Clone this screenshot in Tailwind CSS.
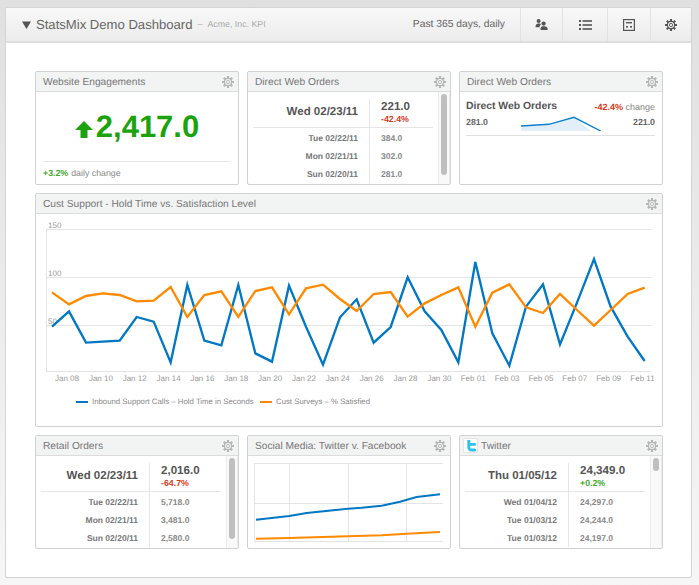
<!DOCTYPE html>
<html>
<head>
<meta charset="utf-8">
<script src="https://cdn.jsdelivr.net/npm/@tailwindcss/browser@4"></script>
</head>
<body class="m-0 h-[585px] w-[699px] overflow-hidden bg-gradient-to-b from-[#e0e0e0] to-[#f6f6f6] font-['Liberation_Sans',Arial,sans-serif] [text-rendering:geometricPrecision]">
<svg class="hidden" width="0" height="0">
  <symbol id="gear" viewBox="0 0 12 12">
    <path d="M6 0V12M0 6H12M1.8 1.8L10.2 10.2M10.2 1.8L1.8 10.2" stroke="currentColor" stroke-width="2.1" fill="none"/>
    <circle cx="6" cy="6" r="4.2" fill="currentColor"/>
    <circle cx="6" cy="6" r="3" fill="#f2f3f3"/>
    <circle cx="6" cy="6" r="1.6" fill="none" stroke="currentColor" stroke-width="0.9"/>
  </symbol>
</svg>
<div class="pt-[7px] pl-[5px]">
  <div class="h-[571px] w-[687px] rounded-[2px] border border-[#d4d4d4] bg-white">
    <!-- top bar -->
    <div class="flex h-[35px] items-center border-b-2 border-[#dedede] bg-gradient-to-b from-[#f8f8f8] to-[#ececec]">
      <svg class="ml-[16px] mr-[5px] h-[8px] w-[9px]" viewBox="0 0 9 8"><path d="M0 0.5H9L4.5 8Z" fill="#555"/></svg>
      <span class="whitespace-nowrap text-[13.1px] text-[#666]">StatsMix Demo Dashboard</span>
      <span class="ml-[5px] text-[9px] text-[#aaa]">–</span>
      <span class="ml-[5px] whitespace-nowrap text-[8.8px] text-[#aaa]">Acme, Inc. KPI</span>
      <span class="ml-auto mr-[15px] whitespace-nowrap text-[10.3px] text-[#666]">Past 365 days, daily</span>
      <div class="flex h-full w-[42px] items-center justify-center border-l border-[#e2e2e2]">
        <svg width="13" height="11" viewBox="0 0 13 11" fill="#555"><circle cx="3.6" cy="2" r="2"/><path d="M0.5 8.2C0.5 5.2 1.8 4.6 3.6 4.6S5.6 5 6 5.6C5 6.2 4.7 7 4.7 8.2Z"/><circle cx="8.6" cy="4.6" r="2.1"/><path d="M5.6 11V9.5C5.6 7.8 7 7.2 8.6 7.2S12.6 7.8 12.6 9.5V11Z"/></svg>
      </div>
      <div class="flex h-full w-[45px] items-center justify-center border-l border-[#e2e2e2]">
        <svg width="13" height="10" viewBox="0 0 13 10" fill="#555"><rect x="0" y="0" width="2" height="2"/><rect x="3.5" y="0.2" width="9.5" height="1.6"/><rect x="0" y="4" width="2" height="2"/><rect x="3.5" y="4.2" width="9.5" height="1.6"/><rect x="0" y="8" width="2" height="2"/><rect x="3.5" y="8.2" width="9.5" height="1.6"/></svg>
      </div>
      <div class="flex h-full w-[43px] items-center justify-center border-l border-[#e2e2e2]">
        <svg width="12" height="12" viewBox="0 0 12 12"><rect x="0.6" y="0.6" width="10.8" height="10.8" fill="none" stroke="#555" stroke-width="1.2"/><rect x="3" y="3" width="6" height="1.4" fill="#555"/><rect x="3" y="7" width="2" height="1.6" fill="#555"/><rect x="7" y="7" width="2" height="1.6" fill="#555"/></svg>
      </div>
      <div class="flex h-full w-[41px] items-center justify-center border-l border-[#e2e2e2]">
        <svg class="h-[12px] w-[12px] text-[#555]"><use href="#gear"/></svg>
      </div>
    </div>

    <!-- widgets -->
    <div class="ml-[29px] mt-[28px] grid w-[628px] grid-cols-[204px_204px_204px] gap-[8px]">

      <!-- Website Engagements -->
      <div class="h-[114px] overflow-hidden rounded-[2px] border border-[#d2d2d2] bg-white">
        <div class="flex h-[20px] items-center justify-between border-b border-[#dcdcdc] bg-[#f2f3f3] pl-[7px] pr-[4px]">
          <span class="whitespace-nowrap pt-[2px] text-[10.2px] text-[#777]">Website Engagements</span>
          <svg class="h-[12px] w-[12px] text-[#b4b4b4]"><use href="#gear"/></svg>
        </div>
        <div class="flex h-[69px] items-center justify-center">
          <svg class="mr-[3px] mt-[5px] h-[17px] w-[18px]" viewBox="0 0 18 17"><path d="M9 0L18 9H12.5V17H5.5V9H0Z" fill="#1ba30f"/></svg>
          <span class="text-[31px] leading-none font-bold text-[#1ba30f]">2,417.0</span>
        </div>
        <div class="mx-[7px] flex items-center border-t border-[#e8e8e8] pt-[6px] text-[8.8px] leading-[11px]">
          <span class="font-bold text-[#3fa92f]">+3.2%</span>
          <span class="ml-[3px] text-[#888]">daily change</span>
        </div>
      </div>

      <!-- Direct Web Orders table -->
      <div class="h-[114px] overflow-hidden rounded-[2px] border border-[#d2d2d2] bg-white">
        <div class="flex h-[20px] items-center justify-between border-b border-[#dcdcdc] bg-[#f2f3f3] pl-[7px] pr-[4px]">
          <span class="whitespace-nowrap pt-[2px] text-[10.2px] text-[#777]">Direct Web Orders</span>
          <svg class="h-[12px] w-[12px] text-[#b4b4b4]"><use href="#gear"/></svg>
        </div>
        <div class="flex h-[92px] overflow-hidden pl-[5px]">
          <div class="w-[180px]">
            <div class="grid h-[36px] grid-cols-[117px_63px] border-b border-[#e6e6e6] pt-[7px]">
              <div class="border-r border-[#e6e6e6] pr-[11px] pt-[5px] text-right text-[11.5px] leading-[16px] font-bold text-[#555]">Wed 02/23/11</div>
              <div class="pl-[11px] pt-[1px]">
                <div class="text-[11.6px] leading-[13px] font-bold text-[#555]">221.0</div>
                <div class="text-[8.8px] leading-[13px] font-bold text-[#d83a1c]">-42.4%</div>
              </div>
            </div>
            <div class="grid grid-cols-[117px_63px] text-[8.5px] leading-[18px] font-bold">
              <div class="border-r border-[#e6e6e6] pr-[11px] pt-[1px] text-right text-[#777]">Tue 02/22/11<br>Mon 02/21/11<br>Sun 02/20/11</div>
              <div class="pl-[11px] pt-[1px] text-[#888]">384.0<br>302.0<br>281.0</div>
            </div>
          </div>
          <div class="ml-[5px] h-full w-[12px] border-x border-[#ececec] bg-[#f9f9f9] px-[2px] pt-[2px]">
            <div class="h-[81px] w-[6px] rounded-[3px] bg-[#bfbfbf]"></div>
          </div>
        </div>
      </div>

      <!-- Direct Web Orders sparkline -->
      <div class="h-[114px] overflow-hidden rounded-[2px] border border-[#d2d2d2] bg-white">
        <div class="flex h-[20px] items-center justify-between border-b border-[#dcdcdc] bg-[#f2f3f3] pl-[7px] pr-[4px]">
          <span class="whitespace-nowrap pt-[2px] text-[10.2px] text-[#777]">Direct Web Orders</span>
          <svg class="h-[12px] w-[12px] text-[#b4b4b4]"><use href="#gear"/></svg>
        </div>
        <div class="mx-[6px] w-[189px] border-b border-[#e0e0e0] pb-[4px] pt-[9px]">
          <div class="flex items-center justify-between leading-[12px]">
            <span class="text-[10.4px] font-bold text-[#555]">Direct Web Orders</span>
            <span class="text-[9px]"><span class="font-bold text-[#d83a1c]">-42.4%</span> <span class="text-[#888]">change</span></span>
          </div>
          <div class="mt-[2px] flex h-[16px] items-center text-[8.8px] font-bold text-[#666]">
            <span class="w-[55px]">281.0</span>
            <svg class="h-[16px] w-[81px]" viewBox="521 115 81 16"><path d="M521 126L549 124.3L574 117.3L591 131H521Z" fill="#e2eff9"/><polyline points="521,126 549,124.3 574,117.3 600.7,131" fill="none" stroke="#0b80d0" stroke-width="1.4"/></svg>
            <span class="ml-auto">221.0</span>
          </div>
        </div>
      </div>

      <!-- main chart -->
      <div class="col-span-3 h-[234px] overflow-hidden rounded-[2px] border border-[#d2d2d2] bg-white">
        <div class="flex h-[20px] items-center justify-between border-b border-[#dcdcdc] bg-[#f2f3f3] pl-[7px] pr-[4px]">
          <span class="whitespace-nowrap pt-[2px] text-[10.2px] text-[#777]">Cust Support - Hold Time vs. Satisfaction Level</span>
          <svg class="h-[12px] w-[12px] text-[#b4b4b4]"><use href="#gear"/></svg>
        </div>
        <svg class="block" width="626" height="170" viewBox="36 214 626 170">
          <g stroke="#e4e4e4" fill="none">
            <path d="M46.5 229.5H651M46.5 277.5H651M46.5 325.5H651M46.5 371.5H651M46.5 229V372"/>
          </g>
          <g font-family="'Liberation Sans',Arial,sans-serif" font-size="8" fill="#999">
            <text x="48" y="228">150</text><text x="48" y="276">100</text><text x="48" y="324">50</text>
          </g>
          <g transform="translate(30 190) scale(0.33333)" fill="none" stroke-width="7" stroke-linejoin="miter">
            <polyline stroke="#0277c4" points="66,410 117,364 168,458 218,455 269,452 320,381 371,395 422,517 472,285 523,452 574,466 625,285 676,490 726,515 777,287 828,410 879,524 930,382 980,328 1031,458 1082,411 1133,262 1184,364 1234,420 1285,517 1336,216 1387,430 1438,527 1488,350 1539,283 1590,463 1641,338 1692,207 1742,350 1793,440 1844,513"/>
            <polyline stroke="#ff8a00" points="66,307 117,343 168,318 218,310 269,315 320,334 371,332 422,291 472,381 523,315 574,304 625,381 676,303 726,292 777,373 828,295 879,284 930,327 980,363 1031,312 1082,306 1133,380 1184,340 1234,315 1285,292 1336,410 1387,308 1438,283 1488,352 1539,369 1590,312 1641,360 1692,407 1742,360 1793,312 1844,293"/>
          </g>
          <g font-family="'Liberation Sans',Arial,sans-serif" font-size="8" fill="#999" text-anchor="middle">
            <text x="67" y="381">Jan 08</text><text x="100.9" y="381">Jan 10</text><text x="134.7" y="381">Jan 12</text><text x="168.6" y="381">Jan 14</text><text x="202.4" y="381">Jan 16</text><text x="236.3" y="381">Jan 18</text><text x="270.1" y="381">Jan 20</text><text x="304" y="381">Jan 22</text><text x="337.8" y="381">Jan 24</text><text x="371.7" y="381">Jan 26</text><text x="405.5" y="381">Jan 28</text><text x="439.4" y="381">Jan 30</text><text x="473.2" y="381">Feb 01</text><text x="507.1" y="381">Feb 03</text><text x="540.9" y="381">Feb 05</text><text x="574.8" y="381">Feb 07</text><text x="608.6" y="381">Feb 09</text><text x="642.5" y="381">Feb 11</text>
          </g>
        </svg>
        <div class="ml-[40px] mt-[12px] flex items-center text-[7.8px] leading-[12px] text-[#888]">
          <span class="h-[2px] w-[12px] bg-[#0277c4]"></span>
          <span class="ml-[4px] w-[168px] whitespace-nowrap">Inbound Support Calls – Hold Time in Seconds</span>
          <span class="h-[2px] w-[12px] bg-[#ff8a00]"></span>
          <span class="ml-[4px] whitespace-nowrap">Cust Surveys – % Satisfied</span>
        </div>
      </div>

      <!-- Retail Orders -->
      <div class="h-[114px] overflow-hidden rounded-[2px] border border-[#d2d2d2] bg-white">
        <div class="flex h-[20px] items-center justify-between border-b border-[#dcdcdc] bg-[#f2f3f3] pl-[7px] pr-[4px]">
          <span class="whitespace-nowrap pt-[2px] text-[10.2px] text-[#777]">Retail Orders</span>
          <svg class="h-[12px] w-[12px] text-[#b4b4b4]"><use href="#gear"/></svg>
        </div>
        <div class="flex h-[92px] overflow-hidden pl-[5px]">
          <div class="w-[180px]">
            <div class="grid h-[36px] grid-cols-[109px_71px] border-b border-[#e6e6e6] pt-[7px]">
              <div class="border-r border-[#e6e6e6] pr-[11px] pt-[5px] text-right text-[11.5px] leading-[16px] font-bold text-[#555]">Wed 02/23/11</div>
              <div class="pl-[11px] pt-[1px]">
                <div class="text-[11.6px] leading-[13px] font-bold text-[#555]">2,016.0</div>
                <div class="text-[8.8px] leading-[13px] font-bold text-[#d83a1c]">-64.7%</div>
              </div>
            </div>
            <div class="grid grid-cols-[109px_71px] text-[8.5px] leading-[18px] font-bold">
              <div class="border-r border-[#e6e6e6] pr-[11px] pt-[1px] text-right text-[#777]">Tue 02/22/11<br>Mon 02/21/11<br>Sun 02/20/11</div>
              <div class="pl-[11px] pt-[1px] text-[#888]">5,718.0<br>3,481.0<br>2,580.0</div>
            </div>
          </div>
          <div class="ml-[5px] h-full w-[12px] border-x border-[#ececec] bg-[#f9f9f9] px-[2px] pt-[2px]">
            <div class="h-[81px] w-[6px] rounded-[3px] bg-[#bfbfbf]"></div>
          </div>
        </div>
      </div>

      <!-- Social Media -->
      <div class="h-[114px] overflow-hidden rounded-[2px] border border-[#d2d2d2] bg-white">
        <div class="flex h-[20px] items-center justify-between border-b border-[#dcdcdc] bg-[#f2f3f3] pl-[7px] pr-[4px]">
          <span class="whitespace-nowrap pt-[2px] text-[10.2px] text-[#777]">Social Media: Twitter v. Facebook</span>
          <svg class="h-[12px] w-[12px] text-[#b4b4b4]"><use href="#gear"/></svg>
        </div>
        <svg class="block" width="202" height="92" viewBox="248 456 202 92">
          <path d="M254.5 463.5H442.7M254.5 503.5H442.7M254.5 541.5H442.7M254.5 463V542M289.5 463V542M348.5 463V542M406.5 463V542" stroke="#e4e4e4" fill="none"/>
          <g transform="translate(240 455) scale(0.33333)" fill="none" stroke-width="6">
            <polyline stroke="#0277c4" points="48,194 148,183 200,174 324,161 365,158 425,152 480,140 530,126 600,118"/>
            <polyline stroke="#ff8a00" points="48,251 148,249 324,244 425,241 500,236 600,231"/>
          </g>
        </svg>
      </div>

      <!-- Twitter -->
      <div class="h-[114px] overflow-hidden rounded-[2px] border border-[#d2d2d2] bg-white">
        <div class="flex h-[20px] items-center border-b border-[#dcdcdc] bg-[#f2f3f3] pl-[3px] pr-[4px]">
          <div class="flex h-[15px] w-[15px] items-center justify-center rounded-[2px] border border-[#e4e4e4] bg-white">
            <svg width="10" height="12" viewBox="0 0 10 12"><path d="M2.8 0.5V7C2.8 9 4 10 5.6 10H8.6M2.8 4.4H8.6" fill="none" stroke="#2bc3ee" stroke-width="2.9" stroke-linecap="round"/></svg>
          </div>
          <span class="ml-[3px] whitespace-nowrap pt-[2px] text-[10.2px] text-[#777]">Twitter</span>
          <svg class="ml-auto h-[12px] w-[12px] text-[#b4b4b4]"><use href="#gear"/></svg>
        </div>
        <div class="flex h-[92px] overflow-hidden pl-[5px]">
          <div class="w-[180px]">
            <div class="grid h-[36px] grid-cols-[104px_76px] border-b border-[#e6e6e6] pt-[7px]">
              <div class="border-r border-[#e6e6e6] pr-[11px] pt-[5px] text-right text-[11.5px] leading-[16px] font-bold text-[#555]">Thu 01/05/12</div>
              <div class="pl-[11px] pt-[1px]">
                <div class="text-[11.6px] leading-[13px] font-bold text-[#555]">24,349.0</div>
                <div class="text-[8.8px] leading-[13px] font-bold text-[#3fa92f]">+0.2%</div>
              </div>
            </div>
            <div class="grid grid-cols-[104px_76px] text-[8.5px] leading-[18px] font-bold">
              <div class="border-r border-[#e6e6e6] pr-[11px] pt-[1px] text-right text-[#777]">Wed 01/04/12<br>Tue 01/03/12<br>Tue 01/03/12</div>
              <div class="pl-[11px] pt-[1px] text-[#888]">24,297.0<br>24,244.0<br>24,197.0</div>
            </div>
          </div>
          <div class="ml-[5px] h-full w-[12px] border-x border-[#ececec] bg-[#f9f9f9] px-[2px] pt-[2px]">
            <div class="h-[13px] w-[6px] rounded-[3px] bg-[#bfbfbf]"></div>
          </div>
        </div>
      </div>

    </div>
  </div>
</div>
</body>
</html>
